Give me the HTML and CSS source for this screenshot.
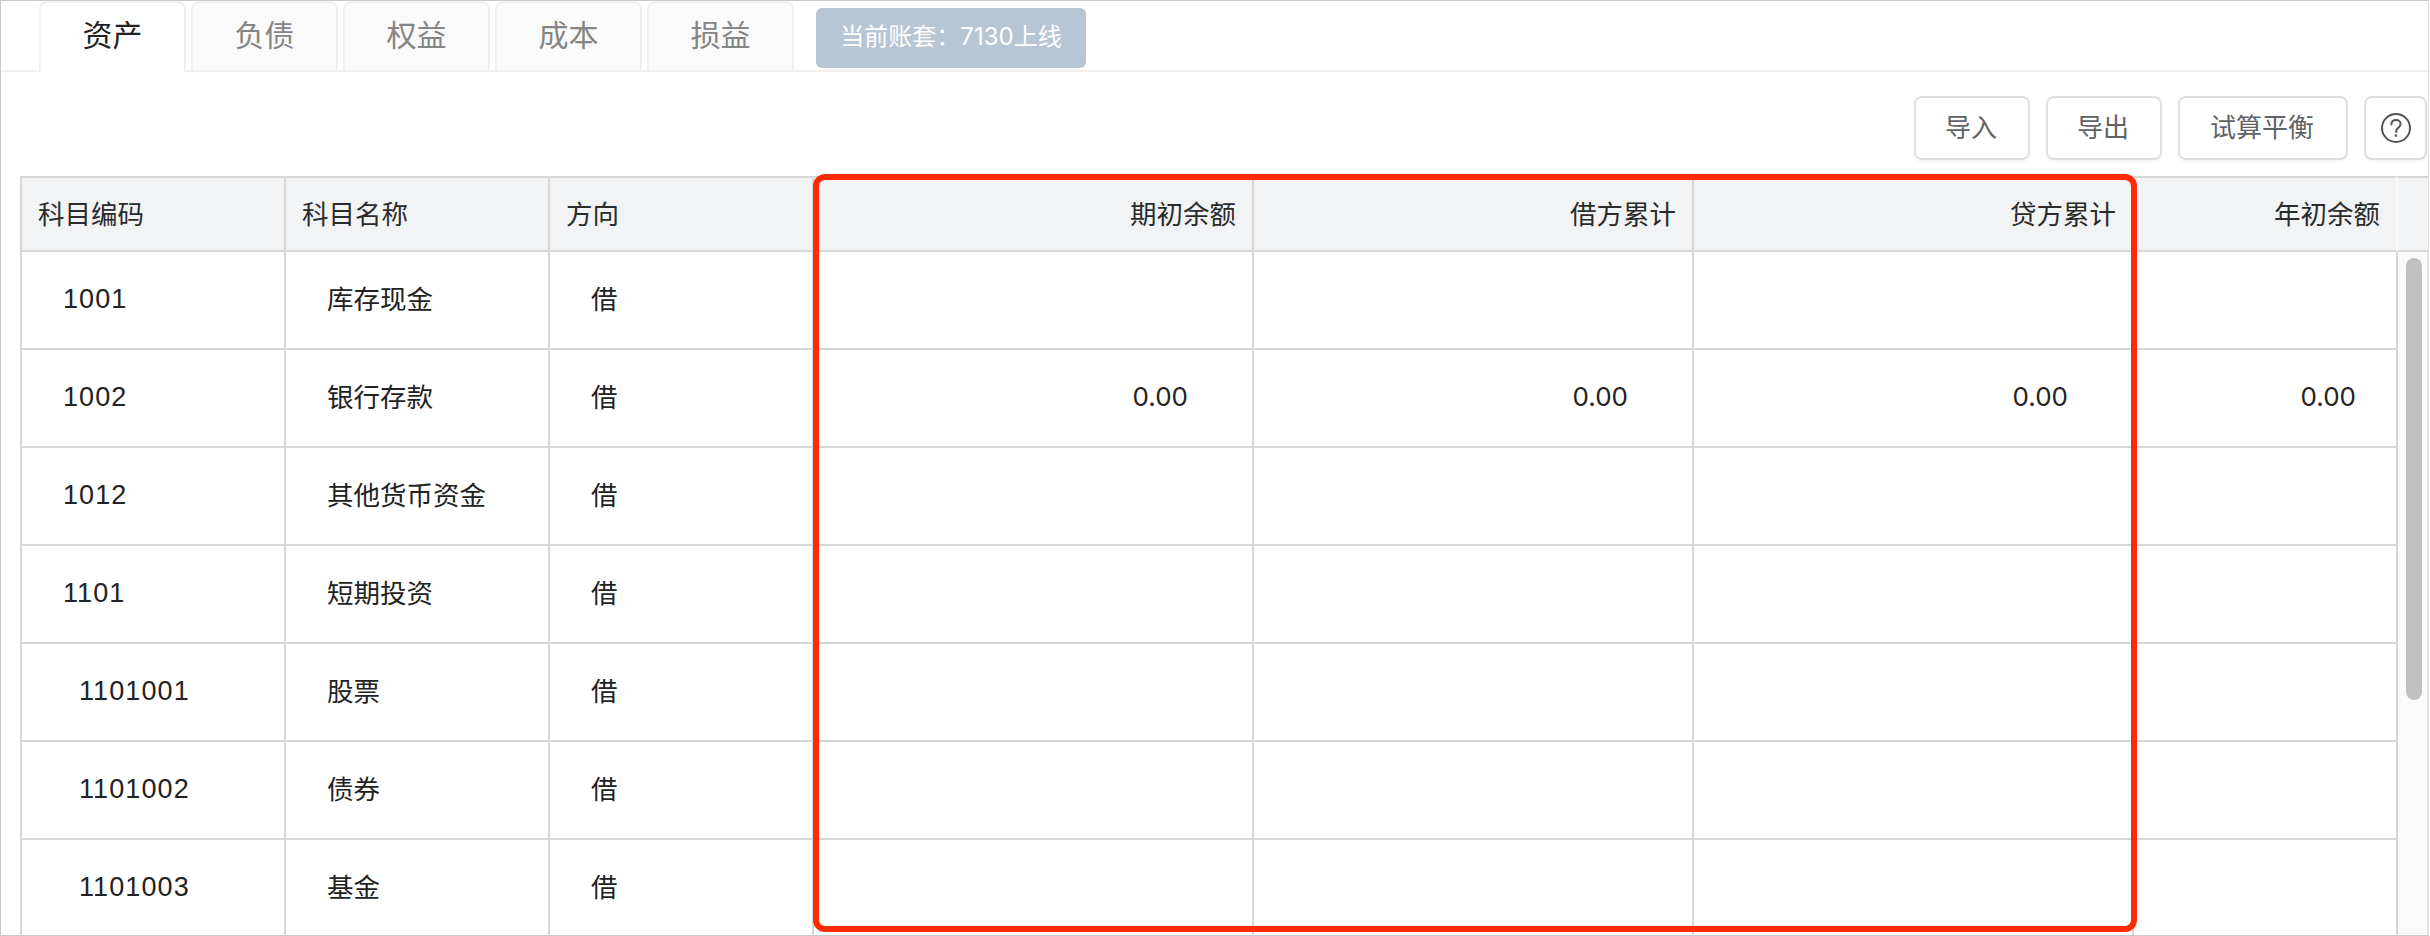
FILE: index.html
```html
<!DOCTYPE html>
<html lang="zh-CN">
<head>
<meta charset="utf-8">
<title>科目期初</title>
<link rel="stylesheet" href="styles.css">
</head>
<body>
<div class="frame">
  <div class="tabbar">
    <div class="tab active">资产</div>
    <div class="tab">负债</div>
    <div class="tab">权益</div>
    <div class="tab">成本</div>
    <div class="tab">损益</div>
    <div class="badge">当前账套：7130上线</div>
  </div>
  <div class="toolbar">
    <button class="btn">导入</button>
    <button class="btn">导出</button>
    <button class="btn">试算平衡</button>
    <button class="btn btn-icon" aria-label="帮助">
      <svg class="help" viewBox="0 0 32 32" width="32" height="32" fill="none" stroke="#555" stroke-width="2">
        <circle cx="16" cy="16" r="14"/>
        <path d="M11.4 12.6c0-2.8 2-4.6 4.7-4.6 2.6 0 4.5 1.7 4.5 4 0 1.8-.9 2.8-2.4 3.9-1.4 1-2 1.8-2 3.4v.6" stroke-linecap="round"/>
        <circle cx="15.9" cy="23.6" r="1.3" fill="#555" stroke="none"/>
      </svg>
    </button>
  </div>
  <div class="sheet">
    <table class="grid">
      <colgroup>
        <col class="c-narrow"><col class="c-narrow"><col class="c-narrow">
        <col class="c-wide"><col class="c-wide"><col class="c-wide">
        <col class="c-narrow">
      </colgroup>
      <thead>
        <tr>
          <th>科目编码</th><th>科目名称</th><th>方向</th>
          <th class="r">期初余额</th><th class="r">借方累计</th><th class="r">贷方累计</th><th class="r">年初余额</th>
        </tr>
      </thead>
      <tbody>
        <tr><td class="code">1001</td><td class="name">库存现金</td><td class="dir">借</td><td></td><td></td><td></td><td></td></tr>
        <tr><td class="code">1002</td><td class="name">银行存款</td><td class="dir">借</td><td class="r">0.00</td><td class="r">0.00</td><td class="r">0.00</td><td class="r last">0.00</td></tr>
        <tr><td class="code">1012</td><td class="name">其他货币资金</td><td class="dir">借</td><td></td><td></td><td></td><td></td></tr>
        <tr><td class="code">1101</td><td class="name">短期投资</td><td class="dir">借</td><td></td><td></td><td></td><td></td></tr>
        <tr><td class="code sub">1101001</td><td class="name">股票</td><td class="dir">借</td><td></td><td></td><td></td><td></td></tr>
        <tr><td class="code sub">1101002</td><td class="name">债券</td><td class="dir">借</td><td></td><td></td><td></td><td></td></tr>
        <tr><td class="code sub">1101003</td><td class="name">基金</td><td class="dir">借</td><td></td><td></td><td></td><td></td></tr>
      </tbody>
    </table>
    <div class="scrollcol">
      <div class="scrollhead"></div>
      <div class="track"><div class="thumb"></div></div>
    </div>
    <div class="highlight"></div>
  </div>
</div>
</body>
</html>
```
FILE: styles.css
```css
* { box-sizing: border-box; }
html, body { margin: 0; padding: 0; background: #fff; }
body {
  font-family: "Inter", "Noto Sans CJK SC", sans-serif;
  color: #222;
}
.frame {
  width: 2429px;
  height: 936px;
  border: 1px solid #c9c9c9;
  border-right-color: #dcdcdc;
  overflow: hidden;
  background: #fff;
}
.tabbar {
  display: flex;
  align-items: flex-start;
  gap: 5px;
  height: 71px;
  padding-left: 38px;
  border-bottom: 2px solid #f0f0f0;
}
.tab {
  width: 147px;
  height: 69px;
  border: 2px solid #f0f0f0;
  border-bottom: 0;
  border-radius: 8px 8px 0 0;
  background: #fafafa;
  color: #858585;
  font-size: 30px;
  line-height: 64px;
  text-align: center;
}
.tab.active {
  height: 71px;
  background: #fff;
  color: #222;
}
.badge {
  margin: 7px 0 0 17px;
  width: 270px;
  height: 60px;
  border-radius: 6px;
  background: #b7c6d5;
  color: #fff;
  font-size: 24px;
  line-height: 58px;
  text-align: center;
  white-space: nowrap;
}
.toolbar {
  display: flex;
  justify-content: flex-end;
  gap: 16px;
  padding: 24px 1px 0 0;
  height: 88px;
}
.btn {
  width: 116px;
  height: 64px;
  padding: 0 2px 0 0;
  border: 2px solid #dedede;
  border-radius: 8px;
  background: #fff;
  color: #606266;
  font-family: inherit;
  font-size: 26px;
  line-height: 1;
  white-space: nowrap;
  box-shadow: 0 2px 3px rgba(0, 0, 0, .04);
}
.btn:nth-child(3) { width: 170px; }
.btn-icon {
  width: 63px;
  padding: 0;
  display: flex;
  align-items: center;
  justify-content: center;
}
.help { display: block; }
.sheet {
  position: relative;
  display: flex;
  margin: 16px 0 0 19px;
  height: 759px;
}
.grid {
  width: 2376px;
  flex: none;
  table-layout: fixed;
  border-collapse: separate;
  border-spacing: 0;
  align-self: flex-start;
}
.c-narrow { width: 264px; }
.c-wide { width: 440px; }
.grid th {
  height: 76px;
  padding: 0 16px;
  background: #f2f3f5;
  border-top: 2px solid #d7d7d7;
  border-left: 2px solid #d7d7d7;
  border-bottom: 2px solid #d7d7d7;
  font-size: 26.5px;
  font-weight: 400;
  line-height: 1;
  text-align: left;
  color: #2b2b2b;
}
.grid th.r { text-align: right; }
.grid td {
  height: 98px;
  padding: 0 0 2px;
  border-left: 2px solid #d7d7d7;
  border-bottom: 2px solid #d7d7d7;
  font-size: 26.5px;
  line-height: 1;
}
.grid td.code {
  padding-left: 41px;
  font-family: "Liberation Sans", sans-serif;
  font-size: 27px;
  letter-spacing: 1.1px;
}
.grid td.sub { padding-left: 57px; }
.grid td.name { padding-left: 41px; }
.grid td.dir { padding-left: 41px; }
.grid td.r { text-align: right; padding-right: 64px; font-size: 26px; }
.grid td.last { padding-right: 40px; }
.scrollcol {
  flex: none;
  width: 32px;
  display: flex;
  flex-direction: column;
}
.scrollhead {
  height: 76px;
  background: #f2f3f5;
  border-top: 2px solid #d7d7d7;
  border-left: 2px solid #f9f9f9;
  border-bottom: 2px solid #d7d7d7;
}
.track {
  flex: 1;
  padding: 6px 0 0 8px;
  background: #fafafa;
  border-left: 2px solid #d7d7d7;
  border-right: 1px solid #e8e8e8;
}
.thumb {
  width: 16px;
  height: 442px;
  border-radius: 8px;
  background: #c1c1c1;
}
.highlight {
  position: absolute;
  left: 793px;
  top: -2px;
  width: 1324px;
  height: 758px;
  border: 6px solid #ff2a00;
  border-radius: 12px;
  pointer-events: none;
}
```
